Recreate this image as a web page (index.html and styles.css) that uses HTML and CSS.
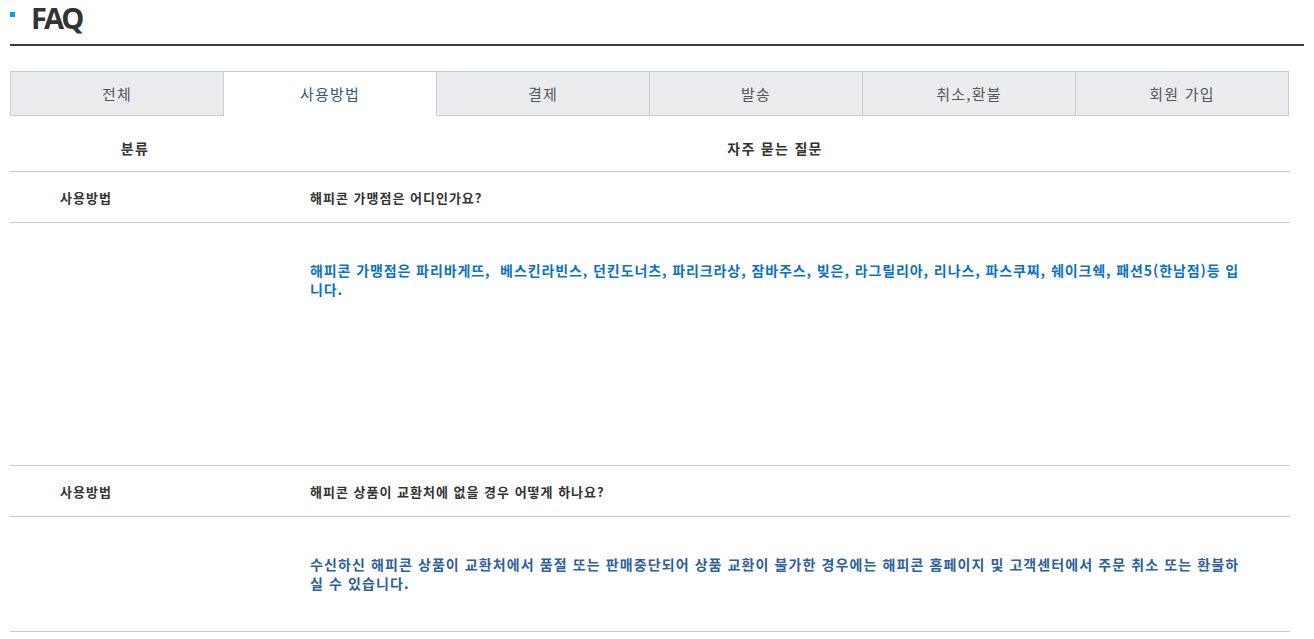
FILE: index.html
```html
<!DOCTYPE html>
<html lang="ko">
<head>
<meta charset="utf-8">
<title>FAQ</title>
<link rel="stylesheet" href="styles.css">
</head>
<body>
<div class="page">
  <div class="title-bar">
    <span class="title-mark"></span>
    <h1 class="title">FAQ</h1>
  </div>

  <ul class="tabs">
    <li class="tab">전체</li>
    <li class="tab active">사용방법</li>
    <li class="tab">결제</li>
    <li class="tab">발송</li>
    <li class="tab">취소,환불</li>
    <li class="tab">회원 가입</li>
  </ul>

  <div class="faq">
    <div class="faq-head">
      <div class="col-cat">분류</div>
      <div class="col-q">자주 묻는 질문</div>
    </div>

    <div class="faq-row">
      <div class="cell-cat">사용방법</div>
      <div class="cell-q">해피콘 가맹점은 어디인가요?</div>
    </div>
    <div class="faq-answer tall">
      <div class="answer-text bright">해피콘 가맹점은 파리바게뜨,&nbsp; 베스킨라빈스, 던킨도너츠, 파리크라상, 잠바주스, 빚은, 라그릴리아, 리나스, 파스쿠찌, 쉐이크쉑, 패션5(한남점)등 입니다.</div>
    </div>

    <div class="faq-row">
      <div class="cell-cat">사용방법</div>
      <div class="cell-q">해피콘 상품이 교환처에 없을 경우 어떻게 하나요?</div>
    </div>
    <div class="faq-answer">
      <div class="answer-text">수신하신 해피콘 상품이 교환처에서 품절 또는 판매중단되어 상품 교환이 불가한 경우에는 해피콘 홈페이지 및 고객센터에서 주문 취소 또는 환불하실 수 있습니다.</div>
    </div>
  </div>
</div>
</body>
</html>
```

FILE: styles.css
```css
* { box-sizing: border-box; }

html, body {
  margin: 0;
  padding: 0;
  background: #ffffff;
}

body {
  font-family: "Noto Sans CJK KR", "Noto Sans", sans-serif;
  color: #333333;
}

.page {
  padding: 0 10px;
}

.title-bar {
  display: flex;
  align-items: center;
  height: 46px;
  border-bottom: 2px solid #3a3a3c;
  padding-bottom: 8px;
}

.title-mark {
  width: 5px;
  height: 5px;
  background: #00a3e3;
  margin-right: 16px;
  align-self: flex-start;
  margin-top: 12px;
}

.title {
  margin: 0;
  font-family: "Open Sans", "Liberation Sans", sans-serif;
  font-weight: 700;
  font-size: 29px;
  line-height: 36px;
  letter-spacing: -2.8px;
  color: #333333;
}

.tabs {
  list-style: none;
  margin: 25px 0 0 0;
  padding: 0;
  display: flex;
  width: 1279px;
  border-left: 1px solid #cccccc;
}

.tab {
  width: 213px;
  height: 45px;
  display: flex;
  align-items: center;
  justify-content: center;
  background: #ebecee;
  border-top: 1px solid #cccccc;
  border-bottom: 1px solid #cccccc;
  border-right: 1px solid #cccccc;
  font-size: 15px;
  letter-spacing: 1.2px;
  color: #555555;
}

.tab.active {
  background: #ffffff;
  border-bottom-color: #ffffff;
  color: #34577f;
}

.faq {
  width: 1280px;
}

.faq-head {
  display: flex;
  padding: 22px 0 13px;
  border-bottom: 1px solid #cccccc;
  font-size: 14px;
  font-weight: 700;
  line-height: 20px;
  letter-spacing: 1.3px;
}

.col-cat {
  width: 250px;
  text-align: center;
}

.col-q {
  flex: 1;
  text-align: center;
}

.faq-row {
  display: flex;
  align-items: center;
  height: 51px;
  border-bottom: 1px solid #cccccc;
  font-size: 13px;
  font-weight: 700;
  letter-spacing: 1px;
}

.cell-cat {
  width: 250px;
  padding-left: 50px;
}

.cell-q {
  flex: 1;
  padding-left: 50px;
}

.faq-answer {
  padding: 38px 50px 38px 300px;
  border-bottom: 1px solid #cccccc;
}

.faq-answer.tall {
  padding-bottom: 166px;
}

.answer-text {
  font-size: 14px;
  font-weight: 700;
  line-height: 19px;
  letter-spacing: 1.1px;
  color: #2d5f9c;
}

.answer-text.bright {
  letter-spacing: 0.9px;
  color: #0a72c4;
}
```
